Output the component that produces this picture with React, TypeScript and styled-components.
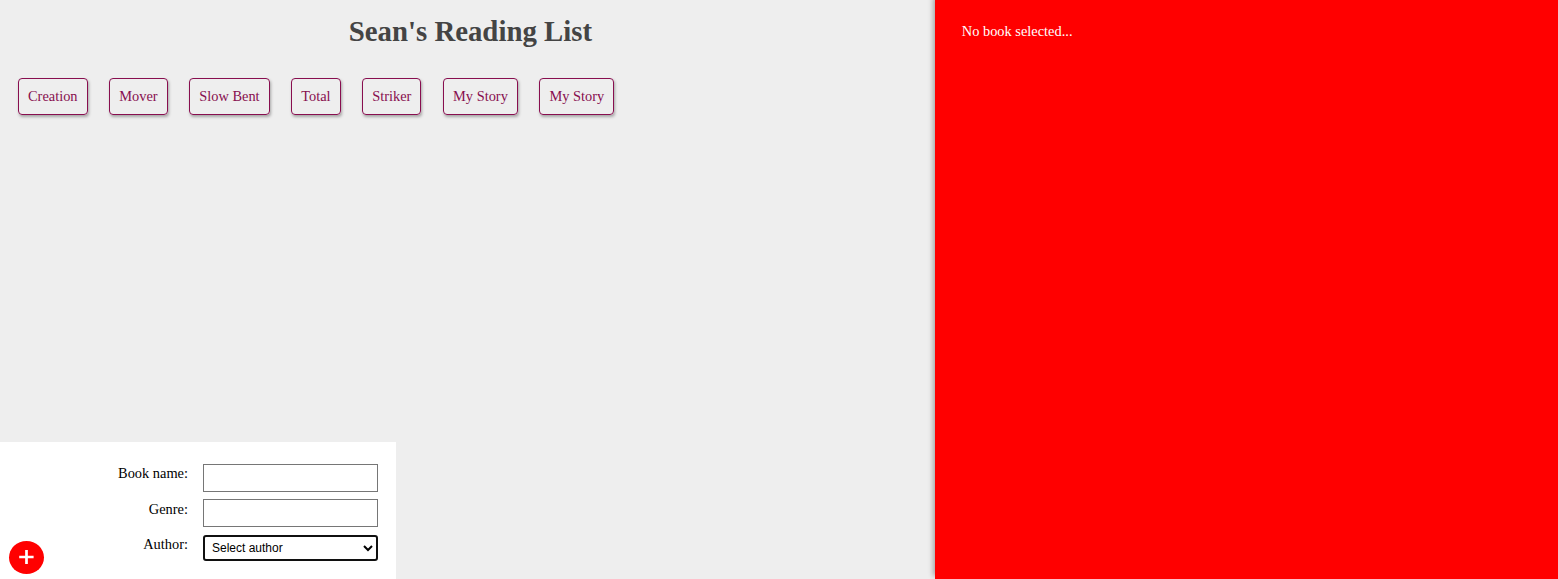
import React from 'react';
import styled, { createGlobalStyle } from 'styled-components';

const GlobalStyle = createGlobalStyle`
  body { margin: 0; font-family: "Liberation Serif", serif; font-size: 14.4px; overflow: hidden; }
  * { box-sizing: border-box; }
`;

const Page = styled.div`
  display: flex;
  height: 579px;
  background: #eee;
  overflow: hidden;
`;

const Main = styled.main`
  width: 934.8px;
  display: flex;
  flex-direction: column;
  justify-content: space-between;
`;

const Title = styled.h1`
  margin: 0;
  padding: 15px 0 0 6px;
  font-size: 28.8px;
  line-height: 33px;
  text-align: center;
  color: #444;
`;

const Books = styled.ul`
  display: flex;
  gap: 21.65px;
  list-style: none;
  margin: 30px 0 0;
  padding: 0 18px;
`;

const Book = styled.li`
  padding: 9px;
  border: 1px solid #880e4f;
  border-radius: 4px;
  box-shadow: 1px 2px 3px rgba(0, 0, 0, 0.3);
  color: #880e4f;
  line-height: 17px;
  height: 37px;
  white-space: nowrap;
`;

const Form = styled.form`
  position: relative;
  width: 396px;
  height: 137px;
  padding: 22px 18px 0 0;
  background: #fff;
`;

const Field = styled.div`
  display: grid;
  grid-template-columns: 188px 175px;
  column-gap: 15px;
  height: 35.4px;

  &:last-of-type { padding-top: 0.2px; }
`;

const Label = styled.label`
  padding-top: 0.2px;
  text-align: right;
  line-height: 19px;
`;

const Input = styled.input`
  height: 28px;
  border: 1px solid #767676;
  font: 13.333px "Liberation Sans", sans-serif;
  outline: none;
`;

const Select = styled.select`
  height: 26px;
  border: 2px solid #101010;
  border-radius: 3px;
  background: #fff;
  font: 12px "Liberation Sans", sans-serif;
  color: #000;
  padding: 0 0 0 3px;
`;

const AddButton = styled.button`
  position: absolute;
  left: 9px;
  bottom: 5px;
  width: 35px;
  height: 33px;
  padding: 0;
  border: 0;
  border-radius: 50%;
  background: #f00;
  color: #fff;
  display: flex;
  align-items: center;
  justify-content: center;
`;

const Details = styled.aside`
  flex: 1;
  padding: 23px 27px;
  background: #f00;
  color: #fff;
  line-height: 17px;
  box-shadow: -2px -3px 5px rgba(0, 0, 0, 0.3);
`;

const books = ['Creation', 'Mover', 'Slow Bent', 'Total', 'Striker', 'My Story', 'My Story'];

export default function App() {
  return (
    <>
      <GlobalStyle />
      <Page>
        <Main>
          <header>
            <Title>Sean's Reading List</Title>
            <Books>
              {books.map((name, i) => <Book key={i}>{name}</Book>)}
            </Books>
          </header>
          <Form>
            <Field><Label htmlFor="name">Book name:</Label><Input id="name" /></Field>
            <Field><Label htmlFor="genre">Genre:</Label><Input id="genre" /></Field>
            <Field>
              <Label htmlFor="author">Author:</Label>
              <Select id="author"><option>Select author</option></Select>
            </Field>
            <AddButton type="button" aria-label="Add book">
              <svg width="35" height="33" viewBox="0 0 35 33" stroke="#fff" strokeWidth="2.7">
                <path d="M17.5 9v14M10.2 16h14.4" />
              </svg>
            </AddButton>
          </Form>
        </Main>
        <Details>No book selected...</Details>
      </Page>
    </>
  );
}
